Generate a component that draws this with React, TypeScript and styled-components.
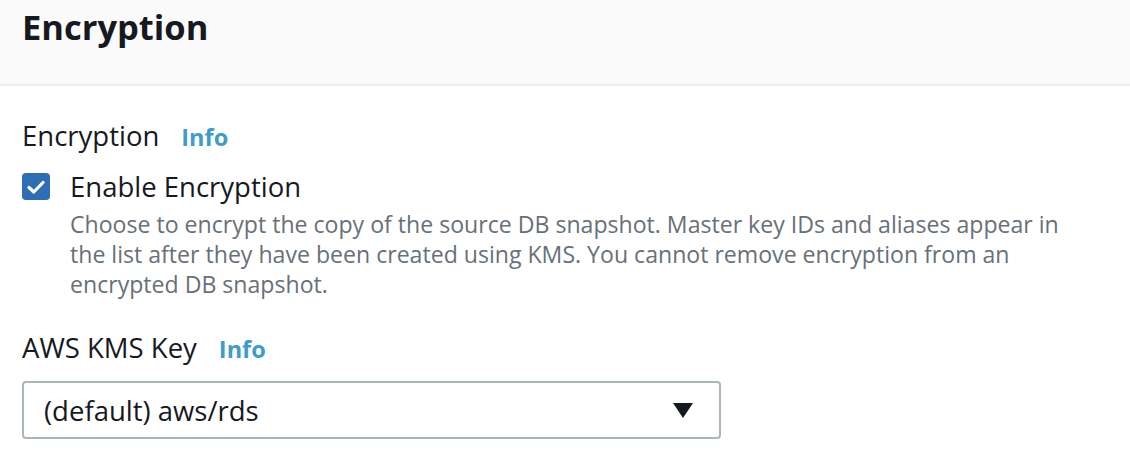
import React from "react"
import styled, { createGlobalStyle } from "styled-components"

const GlobalStyle = createGlobalStyle`
  body {
    margin: 0;
    background: #ffffff;
    font-family: "Open Sans", "Noto Sans", sans-serif;
    color: #16191f;
  }
`

const App = () => {
  return (
    <>
      <GlobalStyle />
      <Panel>
        <Header>
          <Title>Encryption</Title>
        </Header>
        <Body>
          <Field>
            <LabelRow>
              <Label>Encryption</Label>
              <InfoLink href="#">Info</InfoLink>
            </LabelRow>
            <CheckRow>
              <CheckBox>
                <svg width="18" height="14" viewBox="0 0 18 14">
                  <path d="M2 7.5 L6.8 12 L16 2.5" fill="none" stroke="#fff" strokeWidth="3.2" strokeLinecap="round" strokeLinejoin="round" />
                </svg>
              </CheckBox>
              <CheckText>
                <CheckLabel>Enable Encryption</CheckLabel>
                <Description>
                  Choose to encrypt the copy of the source DB snapshot. Master key IDs and aliases appear in the list after they have been created using KMS. You cannot remove encryption from an encrypted DB snapshot.
                </Description>
              </CheckText>
            </CheckRow>
          </Field>
          <Field>
            <LabelRow>
              <Label>AWS KMS Key</Label>
              <InfoLink href="#">Info</InfoLink>
            </LabelRow>
            <Select>
              <span>(default) aws/rds</span>
              <Caret />
            </Select>
          </Field>
        </Body>
      </Panel>
    </>
  )
}

export default App

const Panel = styled.div`
  width: 1130px;
  height: 476px;
  overflow: hidden;
`

const Header = styled.div`
  background: #fafafa;
  border-bottom: 2px solid #eaeded;
  height: 84px;
  padding: 0 22px;
  box-sizing: content-box;
`

const Title = styled.h2`
  margin: 0;
  padding-top: 5px;
  font-size: 34.5px;
  font-weight: 700;
  line-height: 44px;
`

const Body = styled.div`
  padding: 32px 22px 0;
  display: flex;
  flex-direction: column;
  gap: 31px;
`

const Field = styled.div`
  display: flex;
  flex-direction: column;
`

const LabelRow = styled.div`
  display: flex;
  align-items: baseline;
  gap: 22px;
`

const Label = styled.span`
  font-size: 27.5px;
  line-height: 36px;
`

const InfoLink = styled.a`
  font-size: 23.5px;
  font-weight: 700;
  color: #3d9ccc;
  text-decoration: none;
`

const CheckRow = styled.div`
  display: flex;
  gap: 20px;
  margin-top: 16px;
`

const CheckBox = styled.div`
  width: 28px;
  height: 27px;
  flex: none;
  margin-top: 3px;
  border-radius: 4px;
  background: #2f6db5;
  display: flex;
  align-items: center;
  justify-content: center;
`

const CheckText = styled.div`
  display: flex;
  flex-direction: column;
`

const CheckLabel = styled.span`
  font-size: 27.5px;
  line-height: 34px;
`

const Description = styled.p`
  margin: 5px 0 0;
  width: 1000px;
  font-size: 23.1px;
  line-height: 30px;
  color: #687078;
`

const Select = styled.div`
  margin-top: 15px;
  width: 699px;
  height: 58px;
  box-sizing: border-box;
  border: 2px solid #aab7b8;
  border-radius: 4px;
  padding: 0 26px 0 20px;
  display: flex;
  align-items: center;
  justify-content: space-between;
  font-size: 27.5px;
  color: #16191f;
`

const Caret = styled.span`
  width: 0;
  height: 0;
  border-left: 10.5px solid transparent;
  border-right: 10.5px solid transparent;
  border-top: 15px solid #16191f;
`
